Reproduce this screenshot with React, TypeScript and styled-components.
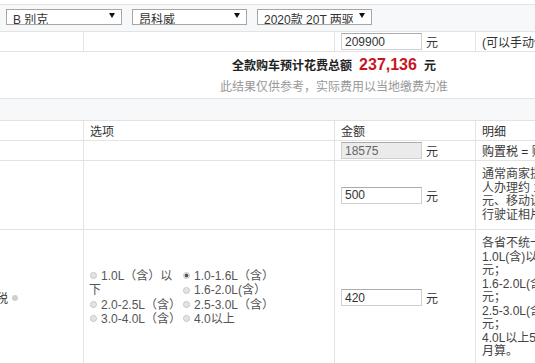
import styled, { createGlobalStyle } from 'styled-components'

const GlobalStyle = createGlobalStyle`
  * { box-sizing: border-box; }
  html, body { margin: 0; padding: 0; overflow: hidden; background: #fff; }
  body {
    font-family: "Liberation Sans", Arial, "Noto Sans CJK SC", sans-serif;
    font-size: 12px;
    color: #333;
  }
`

const Page = styled.div`
  width: 668px;
  padding-top: 4px;
`

const TopBar = styled.div`
  display: flex;
  gap: 10px;
  padding: 4px 6px 6px;
  background: #f7f8fa;
  border-top: 1px solid #e3e3e3;
  border-bottom: 1px solid #e3e3e3;
`

const SelectWrap = styled.div<{ $w: number }>`
  position: relative;
  width: ${(p) => p.$w}px;
  height: 16px;

  &::after {
    content: '';
    position: absolute;
    right: 7px;
    top: 4px;
    border-left: 3px solid transparent;
    border-right: 3px solid transparent;
    border-top: 5px solid #111;
    pointer-events: none;
  }
`

const Select = styled.select`
  appearance: none;
  width: 100%;
  height: 16px;
  border: 1px solid #a6a6a6;
  border-radius: 0;
  background: #fff;
  padding: 3px 18px 0 6px;
  font: 12px "Liberation Sans", "Noto Sans CJK SC", sans-serif;
  line-height: 14px;
  color: #333;
  outline: none;
`

const Row = styled.div<{ $h?: number }>`
  display: grid;
  grid-template-columns: 84px 251px 141px 1fr;
  min-height: ${(p) => p.$h ?? 20}px;
  border-bottom: 1px solid #e3e3e3;
`

const Cell = styled.div<{ $end?: boolean }>`
  display: flex;
  align-items: center;
  justify-content: ${(p) => (p.$end ? 'flex-end' : 'flex-start')};
  padding: 0 6px;
  border-right: 1px solid #e3e3e3;
  white-space: nowrap;

  &:last-child {
    border-right: none;
  }
`

const Summary = styled.div`
  display: flex;
  flex-direction: column;
  align-items: center;
  gap: 3px;
  padding: 3px 0;
  border-bottom: 1px solid #e3e3e3;
`

const TotalLine = styled.div`
  font-weight: bold;
  line-height: 20px;
  color: #222;
`

const Price = styled.span`
  font-size: 16px;
  color: #c8161e;
  margin: 0 7px;
`

const Hint = styled.div`
  color: #999;
  line-height: 16px;
`

const Band = styled.div`
  height: 22px;
  background: #f7f8fa;
  border-bottom: 1px solid #e3e3e3;
`

const AmountInput = styled.input`
  width: 81px;
  height: 17px;
  padding: 0 3px;
  border: 1px solid #cfcfcf;
  border-top-color: #ababab;
  font: 12px "Liberation Sans", sans-serif;
  color: #333;
  background: #fff;
  outline: none;

  &:disabled {
    background: #ebebeb;
    color: #666;
  }
`

const Unit = styled.span`
  margin-left: 4px;
`

const Detail = styled.div`
  padding: 7px 0;
  line-height: 13.5px;
  color: #444;
`

const LabelText = styled.span`
  display: flex;
  align-items: center;
  padding-right: 59px;
`

const HelpDot = styled.span`
  width: 6px;
  height: 6px;
  margin-left: 4px;
  border-radius: 50%;
  background: #cfcfcf;
`

const Options = styled.div`
  display: grid;
  grid-template-columns: 93px 93px;
  line-height: 14.4px;
  color: #555;
  white-space: normal;
  margin-left: -1px;
`

const Option = styled.label<{ $span?: boolean }>`
  grid-row: ${(p) => (p.$span ? 'span 2' : 'auto')};
  white-space: ${(p) => (p.$span ? 'normal' : 'nowrap')};
`

const Radio = styled.input`
  appearance: none;
  position: relative;
  top: -1px;
  width: 7px;
  height: 7px;
  margin: 0 4px 0 1px;
  border-radius: 50%;
  border: 1px solid #c6c6c6;
  background: #e4e4e4;
  vertical-align: middle;

  &:checked {
    background: radial-gradient(circle, #555 0 1.6px, #e4e4e4 2.2px);
  }
`

const displacement = [
  { text: '1.0L（含）以下', span: true },
  { text: '1.0-1.6L（含）', checked: true },
  { text: '1.6-2.0L(含）' },
  { text: '2.0-2.5L（含）' },
  { text: '2.5-3.0L（含）' },
  { text: '3.0-4.0L（含）' },
  { text: '4.0以上' },
]

const plateLines = [
  '通常商家提供上牌服务，收费约',
  '人办理约 125元（其中号牌费',
  '元、移动证费5元、工本费10元',
  '行驶证相片10元）',
]

const taxLines = [
  '各省不统一，以北京为例：',
  '1.0L(含)以下至1.6L(含)420',
  '元；',
  '1.6-2.0L(含)至2.5L(含)480',
  '元；',
  '2.5-3.0L(含)至4.0L(含)1920',
  '元；',
  '4.0L以上5280元，不足一年按',
  '月算。',
]

const App = () => {
  return (
    <Page>
      <GlobalStyle />
      <TopBar>
        <SelectWrap $w={116}>
          <Select defaultValue="buick">
            <option value="buick">B 别克</option>
          </Select>
        </SelectWrap>
        <SelectWrap $w={115}>
          <Select defaultValue="envision">
            <option value="envision">昂科威</option>
          </Select>
        </SelectWrap>
        <SelectWrap $w={115}>
          <Select defaultValue="2020">
            <option value="2020">2020款 20T 两驱精英型</option>
          </Select>
        </SelectWrap>
      </TopBar>

      <Row>
        <Cell />
        <Cell />
        <Cell>
          <AmountInput defaultValue="209900" />
          <Unit>元</Unit>
        </Cell>
        <Cell>(可以手动修改裸车价)</Cell>
      </Row>

      <Summary>
        <TotalLine>
          全款购车预计花费总额<Price>237,136</Price>元
        </TotalLine>
        <Hint>此结果仅供参考，实际费用以当地缴费为准</Hint>
      </Summary>

      <Band />

      <Row>
        <Cell />
        <Cell>选项</Cell>
        <Cell>金额</Cell>
        <Cell>明细</Cell>
      </Row>

      <Row>
        <Cell />
        <Cell />
        <Cell>
          <AmountInput defaultValue="18575" disabled />
          <Unit>元</Unit>
        </Cell>
        <Cell>购置税 = 购车款/(1+13%)×10%</Cell>
      </Row>

      <Row>
        <Cell />
        <Cell />
        <Cell>
          <AmountInput defaultValue="500" />
          <Unit>元</Unit>
        </Cell>
        <Cell>
          <Detail>
            {plateLines.map((l) => (
              <div key={l}>{l}</div>
            ))}
          </Detail>
        </Cell>
      </Row>

      <Row>
        <Cell $end>
          <LabelText>
            车船使用税<HelpDot />
          </LabelText>
        </Cell>
        <Cell>
          <Options>
            {displacement.map((o) => (
              <Option key={o.text} $span={o.span}>
                <Radio type="radio" name="cc" defaultChecked={o.checked} />
                {o.text}
              </Option>
            ))}
          </Options>
        </Cell>
        <Cell>
          <AmountInput defaultValue="420" />
          <Unit>元</Unit>
        </Cell>
        <Cell>
          <Detail>
            {taxLines.map((l, i) => (
              <div key={i}>{l}</div>
            ))}
          </Detail>
        </Cell>
      </Row>
    </Page>
  )
}

export default App
